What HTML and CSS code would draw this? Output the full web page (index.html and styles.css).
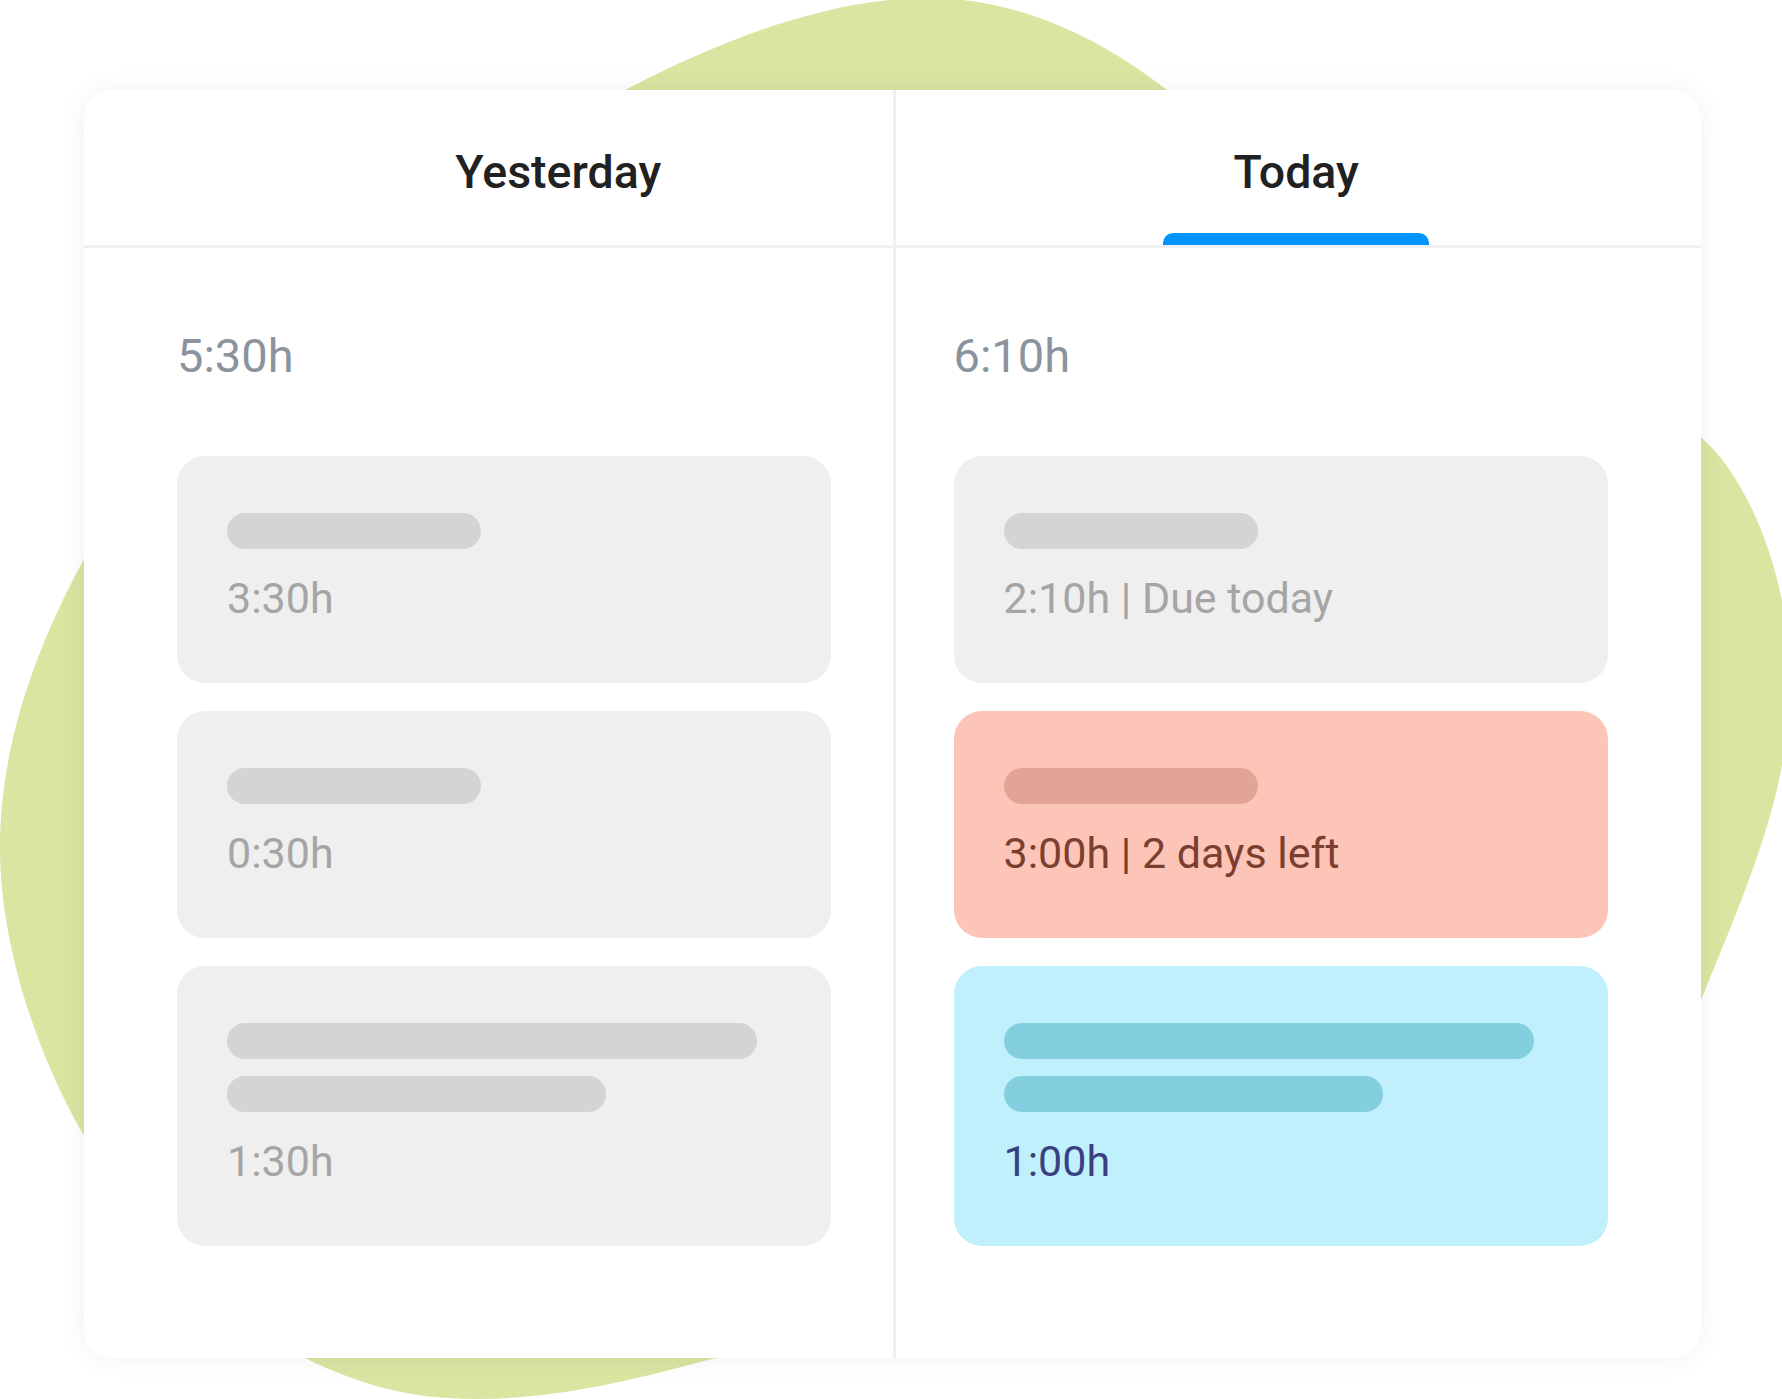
FILE: index.html
```html
<!DOCTYPE html>
<html lang="en">
<head>
  <meta charset="UTF-8" />
  <title>Time tracking — Yesterday / Today</title>
  <link rel="stylesheet" href="styles.css">
</head>
<body>
  <div class="stage">
    <svg class="blob" viewBox="0 0 1782 1399" width="1782" height="1399" aria-hidden="true">
      <path d="M926 -2
               C1010 -2 1090 30 1167 90
               L1701 437
               C1750 480 1790 580 1790 680
               C1790 790 1750 880 1701 1000
               L716 1358
               C640 1378 560 1399 477 1399
               C410 1399 360 1385 305 1358
               L84 1136
               C40 1060 0 950 0 847
               C0 740 40 640 84 559
               L625 90
               C720 40 830 -2 926 -2 Z" />
    </svg>

    <div class="board">
      <section class="day day-yesterday">
        <div class="tab"><span class="tab-label">Yesterday</span></div>
        <div class="day-body">
          <div class="total">5:30h</div>

          <div class="task">
            <div class="line line-short"></div>
            <div class="meta">3:30h</div>
          </div>
          <div class="task">
            <div class="line line-short"></div>
            <div class="meta">0:30h</div>
          </div>
          <div class="task">
            <div class="line line-long"></div>
            <div class="line line-mid"></div>
            <div class="meta">1:30h</div>
          </div>
        </div>
      </section>

      <section class="day day-today">
        <div class="tab tab-active"><span class="tab-label">Today</span></div>
        <div class="day-body">
          <div class="total">6:10h</div>

          <div class="task">
            <div class="line line-short"></div>
            <div class="meta">2:10h | Due today</div>
          </div>
          <div class="task task-urgent">
            <div class="line line-short"></div>
            <div class="meta">3:00h | 2 days left</div>
          </div>
          <div class="task task-info">
            <div class="line line-long"></div>
            <div class="line line-mid"></div>
            <div class="meta">1:00h</div>
          </div>
        </div>
      </section>
    </div>
  </div>
</body>
</html>
```

FILE: styles.css
```css
body {
  margin: 0;
  background: #fff;
  font-family: Roboto, 'Liberation Sans', sans-serif;
}

.stage {
  position: relative;
  width: 1782px;
  height: 1399px;
  overflow: hidden;
}

.blob {
  position: absolute;
  top: 0;
  left: 0;
}

.blob path {
  fill: #d9e5a1;
}

.board {
  position: relative;
  display: grid;
  grid-template-columns: 1fr 1fr;
  width: 1617px;
  height: 1268px;
  margin: 90px 0 0 84px;
  background: #fff;
  border-radius: 28px;
  box-shadow: 0 0 28px rgba(0,0,0,0.06);
}

.day-today {
  border-left: 3px solid #f1f1f1;
}

/* tabs */
.tab {
  position: relative;
  height: 155px;
  border-bottom: 3px solid #f1f1f1;
  text-align: center;
}

.day-yesterday .tab {
  padding-left: 140px;
}

.day-today .tab {
  padding-right: 4px;
}

.tab-label {
  display: inline-block;
  padding-top: 55px;
  font-size: 46.5px;
  line-height: 54px;
  font-weight: 500;
  color: #212121;
}

.tab-active::after {
  content: '';
  position: absolute;
  bottom: 0;
  left: 50%;
  width: 266px;
  height: 12px;
  margin-left: -135px;
  background: #0094ff;
  border-radius: 10px 10px 0 0;
}

/* body */
.day-body {
  padding-top: 82px;
}

.day-yesterday .day-body {
  padding-left: 93px;
  padding-right: 62px;
}

.day-today .day-body {
  padding-left: 58px;
  padding-right: 93px;
}

.total {
  font-size: 47px;
  line-height: 52px;
  color: #8b939e;
  margin-bottom: 74px;
}

.task {
  padding: 57px 50px 59px;
  margin-bottom: 28px;
  background: #efefef;
  border-radius: 28px;
}

.line {
  height: 36px;
  border-radius: 18px;
  background: #d4d4d4;
  margin-bottom: 17px;
}

.line-short { width: 254px; }
.line-mid { width: 379px; }
.line-long { width: 530px; }

.meta {
  margin-top: 23px;
  font-size: 43px;
  line-height: 52px;
  color: #a5a5a5;
}

.task-urgent {
  background: #fcc5b7;
}

.task-urgent .line {
  background: #e2a496;
}

.task-urgent .meta {
  color: #7b3e2f;
}

.task-info {
  background: #c0f0fb;
}

.task-info .line {
  background: #84cfdf;
}

.task-info .meta {
  color: #3a3f82;
}
```
